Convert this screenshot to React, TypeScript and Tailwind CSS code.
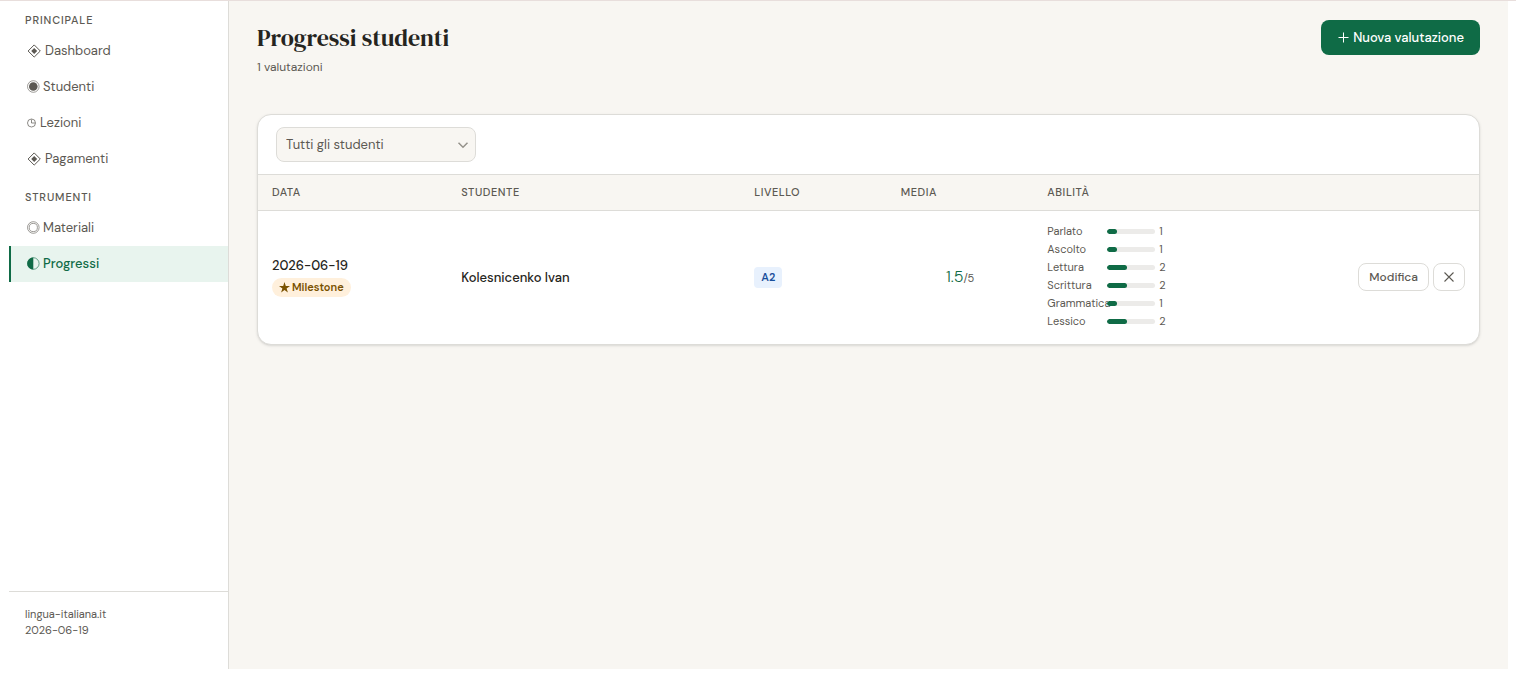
import React from 'react';

type IconName = 'diamond' | 'fisheye' | 'clock' | 'bullseye' | 'half';

interface NavItem {
    label: string;
    icon: IconName;
    active?: boolean;
}

interface Skill {
    label: string;
    value: number;
}

const MAIN_NAV: NavItem[] = [
    { label: 'Dashboard', icon: 'diamond' },
    { label: 'Studenti', icon: 'fisheye' },
    { label: 'Lezioni', icon: 'clock' },
    { label: 'Pagamenti', icon: 'diamond' },
];

const TOOLS_NAV: NavItem[] = [
    { label: 'Materiali', icon: 'bullseye' },
    { label: 'Progressi', icon: 'half', active: true },
];

const SKILLS: Skill[] = [
    { label: 'Parlato', value: 1 },
    { label: 'Ascolto', value: 1 },
    { label: 'Lettura', value: 2 },
    { label: 'Scrittura', value: 2 },
    { label: 'Grammatica', value: 1 },
    { label: 'Lessico', value: 2 },
];

const NavIcon: React.FC<{ name: IconName }> = ({ name }) => {
    if (name === 'clock') {
        return (
            <svg width="9" height="10" viewBox="0 0 9 10" fill="none" stroke="currentColor" strokeWidth="0.7" aria-hidden="true">
                <circle cx="4.5" cy="5" r="4" />
                <path d="M4.5 1.5V5H8" />
            </svg>
        );
    }
    if (name === 'diamond') {
        return (
            <svg width="14" height="14" viewBox="0 0 14 14" fill="none" stroke="currentColor" strokeWidth="1" aria-hidden="true">
                <path d="M7.2 0.9L13.3 7L7.2 13.1L1.1 7Z" />
                <path d="M7.2 4L10.2 7L7.2 10L4.2 7Z" fill="currentColor" stroke="none" />
            </svg>
        );
    }
    return (
        <svg width="12" height="14" viewBox="0 0 12 14" fill="none" stroke="currentColor" strokeWidth="0.6" className="overflow-visible" aria-hidden="true">
            <circle cx="6.3" cy="6.5" r="5.8" />
            {name === 'fisheye' && <circle cx="6.3" cy="6.5" r="4.3" fill="currentColor" stroke="none" />}
            {name === 'bullseye' && <circle cx="6.3" cy="6.5" r="4.1" />}
            {name === 'half' && <path d="M6.3 0.4A6.1 6.1 0 0 0 6.3 12.6Z" fill="currentColor" stroke="none" />}
        </svg>
    );
};

const NavSection: React.FC<{ title: string; items: NavItem[] }> = ({ title, items }) => (
    <div>
        <h2 className="px-4 text-[11px] leading-4 font-medium tracking-[0.08em] text-[#5c5953]">{title}</h2>
        <ul className="pt-[5px]">
            {items.map((item) => (
                <li key={item.label}>
                    <a
                        href="#"
                        aria-current={item.active ? 'page' : undefined}
                        className={
                            item.active
                                ? 'flex h-9 items-center gap-1 border-l-2 border-[#0f6b46] bg-[#e8f4ee] px-4 text-[13px] font-medium text-[#0f6b46]'
                                : 'flex h-9 items-center gap-1 border-l-2 border-transparent px-4 text-[13px] text-[#5c5953]'
                        }
                    >
                        <NavIcon name={item.icon} />
                        {item.label}
                    </a>
                </li>
            ))}
        </ul>
    </div>
);

const SkillBar: React.FC<{ skill: Skill }> = ({ skill }) => (
    <li className="flex h-[18px] items-center gap-1">
        <span className="w-14 shrink-0 text-[11px]">{skill.label}</span>
        <span className="h-[5px] w-12 overflow-hidden rounded-full bg-[#ecebe9]">
            <span className="block h-full rounded-full bg-[#0f6b46]" style={{ width: `${(skill.value / 5) * 100}%` }} />
        </span>
        <span className="text-[11px]">{skill.value}</span>
    </li>
);

const App: React.FC = () => (
    <div className="flex min-h-screen flex-col border-t border-[#e8dedc] bg-white pr-2 pb-[31px] font-['DM_Sans',Inter,'Liberation_Sans',sans-serif] text-[13px] text-[#5c5953]">
        <div className="flex flex-1">
            <aside className="flex w-[229px] shrink-0 flex-col border-r border-[#dddcd8] pl-[9px]">
                <nav className="space-y-3 pt-[11px]">
                    <NavSection title="PRINCIPALE" items={MAIN_NAV} />
                    <NavSection title="STRUMENTI" items={TOOLS_NAV} />
                </nav>
                <div className="mt-auto border-t border-[#dddcd8] px-4 pt-[14px] pb-[31px] text-[11px] leading-4">
                    <p>lingua-italiana.it</p>
                    <p>2026-06-19</p>
                </div>
            </aside>

            <main className="min-w-0 flex-1 bg-[#f8f6f2] px-7 pt-[19px]">
                <header className="mb-[39px] flex items-start justify-between">
                    <div>
                        <h1 className="font-['DM_Serif_Display','Liberation_Serif',serif] text-2xl leading-9 font-semibold text-[#252420]">Progressi studenti</h1>
                        <p className="mt-[3px] text-xs">1 valutazioni</p>
                    </div>
                    <button type="button" className="flex h-[35px] items-center gap-1 rounded-lg bg-[#0f6b46] px-4 text-[13px] font-medium text-white">
                        <svg width="12" height="12" viewBox="0 0 12 12" stroke="currentColor" strokeWidth="1" aria-hidden="true">
                            <path d="M6.5 0.5V10.5M1.5 5.5H11.5" />
                        </svg>
                        Nuova valutazione
                    </button>
                </header>

                <section className="overflow-hidden rounded-[14px] border border-[#dddcd8] bg-white shadow-sm">
                    <div className="flex px-[18px] py-3">
                        <div className="relative w-[200px]">
                            <select
                                aria-label="Studente"
                                className="h-[35px] w-full appearance-none rounded-lg border border-[#dddcd8] bg-[#f8f6f2] px-[9px] text-[13px] text-[#5c5953]"
                            >
                                <option>Tutti gli studenti</option>
                            </select>
                            <svg className="pointer-events-none absolute top-3 right-[7px]" width="12" height="12" viewBox="0 0 12 12" fill="none" stroke="#96938c" strokeWidth="1.5" aria-hidden="true">
                                <path d="M1.5 3.7L6 8.2L10.5 3.7" />
                            </svg>
                        </div>
                    </div>
                    <table className="w-full table-fixed border-t border-[#dddcd8] text-left">
                        <thead>
                            <tr className="h-9 border-b border-[#dddcd8] bg-[#f8f6f2] text-[11px] tracking-wider">
                                <th className="w-[15.5%] px-[14px] font-medium">DATA</th>
                                <th className="w-[24%] px-[14px] font-medium">STUDENTE</th>
                                <th className="w-[12%] px-[14px] font-medium">LIVELLO</th>
                                <th className="w-[12%] px-[14px] font-medium">MEDIA</th>
                                <th className="w-[20%] px-[14px] font-medium">ABILITÀ</th>
                                <th className="px-[14px]" aria-label="Azioni" />
                            </tr>
                        </thead>
                        <tbody>
                            <tr className="h-[133px]">
                                <td className="px-[14px] text-[#252420]">
                                    <div className="font-medium leading-5">2026-06-19</div>
                                    <span className="mt-0.5 inline-flex h-[19px] items-center gap-0.5 rounded-full bg-[#fff0dc] px-[7px] text-[11px] font-semibold text-[#7a5200]">
                                        <svg width="11" height="11" viewBox="0 0 11 11" fill="currentColor" aria-hidden="true">
                                            <path d="M5.5 0L6.8 4H11L7.6 6.5L8.9 10.6L5.5 8.1L2.1 10.6L3.4 6.5L0 4H4.2Z" />
                                        </svg>
                                        Milestone
                                    </span>
                                </td>
                                <td className="px-[14px] font-medium text-[#252420]">Kolesnicenko Ivan</td>
                                <td className="px-[14px]">
                                    <span className="inline-flex h-[21px] items-center rounded bg-[#e8f1fd] px-[7px] text-[11px] font-semibold text-[#1a4f9c]">A2</span>
                                </td>
                                <td className="px-[14px] text-center text-[11px]">
                                    <span className="text-base font-light text-[#0f6b46]">1.5</span>/5
                                </td>
                                <td className="px-[14px]">
                                    <ul className="pb-0.5">
                                        {SKILLS.map((skill) => (
                                            <SkillBar key={skill.label} skill={skill} />
                                        ))}
                                    </ul>
                                </td>
                                <td className="px-[14px]">
                                    <div className="flex justify-end gap-1">
                                        <button type="button" className="h-7 rounded-lg border border-[#dddcd8] px-[10px] text-xs font-medium">
                                            Modifica
                                        </button>
                                        <button type="button" aria-label="Elimina" className="flex h-7 w-8 items-center justify-center rounded-lg border border-[#dddcd8]">
                                            <svg width="10" height="10" viewBox="0 0 10 10" stroke="currentColor" strokeWidth="1.1" aria-hidden="true">
                                                <path d="M0.5 0.5L9.5 9.5M9.5 0.5L0.5 9.5" />
                                            </svg>
                                        </button>
                                    </div>
                                </td>
                            </tr>
                        </tbody>
                    </table>
                </section>
            </main>
        </div>
    </div>
);

export default App;
